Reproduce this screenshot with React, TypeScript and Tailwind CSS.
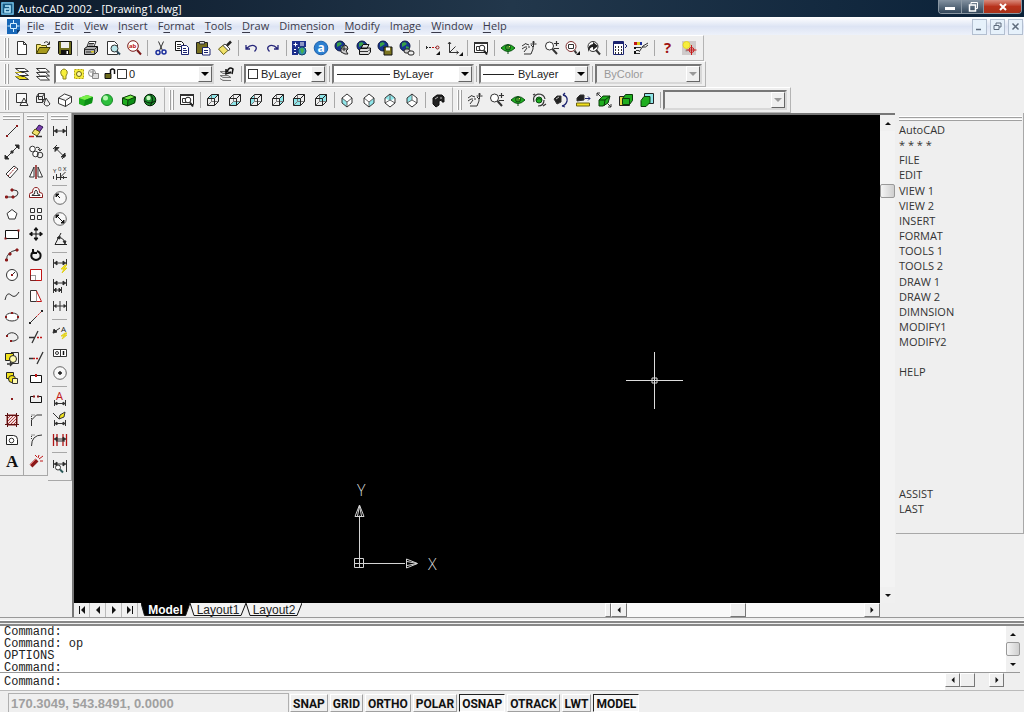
import { ReactNode } from "react";
import clsx from "clsx";

const RED = "#8b1a1a";
const GREEN = "#1fae1f";
const CYAN = "#8fe6ea";

// Wireframe box seen from the front, one face filled
const viewBox = (face: string) => (
  <>
    <path d={face} fill={CYAN} stroke="none" />
    <path d="M6.500 2.500v7h7M6.500 9.500l-4 4" stroke="#777" />
    <path d="M2.500 6.500h7v7h-7zM2.500 6.500l4-4h7v7l-4 4M9.500 6.500l4-4" stroke="#222" />
  </>
);

// Box standing on its corner
const isoBox = (face: string, edges: string) => (
  <>
    <path d="M8 2l5 4v5l-5 4-5-4V6z" fill="#fff" stroke="none" />
    <path d={face} fill={CYAN} stroke="none" />
    <path d={edges} stroke="#666" />
    <path d="M8 2l5 4v5l-5 4-5-4V6z" />
  </>
);

const globe = (
  <>
    <circle cx="6" cy="6" r="5" fill="#16348f" stroke="#0b1740" />
    <path d="M3 3l3-1 2 2-3 2-2 1zM7 6l3 1-1 3-2-1z" fill="#37a047" stroke="none" />
  </>
);

const lens = (
  <>
    <circle cx="6.500" cy="6" r="4" fill="#fff" />
    <path d="M9.500 9l4.500 5" strokeWidth="2" />
  </>
);

const hand = (
  <path
    d="M1 6l3-2M1 9l3-2M3 12l3-4M4 3.500l4 1.500M5 8V6M8 8V6M3 14h7l2-5V7L10 5M12.500 1v6M9.500 4h6M11.500 2.500l1-1.500 1 1.500"
    stroke="#333"
  />
);

const eye = (
  <>
    <path d="M1 8q7-7 14 0q-7 7-14 0z" fill={GREEN} stroke="#0a4d12" />
    <circle cx="8" cy="7.500" r="2.500" fill="#3f8f2a" stroke="#0a4d12" />
    <path d="M9 6h1v1H9z" fill="#f1e26a" stroke="none" />
    <path d="M8 12v2" stroke="#0a4d12" />
  </>
);

const solidBox = (
  <>
    <path d="M1 6l8-3 6 2-1 6-8 3-5-2z" fill={GREEN} stroke="none" />
    <path d="M1 6l8-3 6 2-8 3z" fill="#7af04a" stroke="none" />
    <path d="M7 8l8-3-1 6-8 3z" fill="#0c8f16" stroke="none" />
  </>
);

const camera = (
  <>
    <path d="M3 6l4-3h5l2 2v5h-2V8L9 9v4l-3 2-3-3z" fill="#222" stroke="#111" />
    <path d="M5 7l3-2M10 6h2" stroke="#bbb" />
  </>
);

const dimH = (
  <path d="M1.500 3v10M14.500 3v10M2 8h12M5 6L2.500 8 5 10zM11 6l2.500 2L11 10z" fill="#111" />
);

const icons: Record<string, ReactNode> = {
  "New": <path d="M3.500 1.500h6l3 3v10h-9zM9.500 1.500v3h3" fill="#fff" />,
  "Open": (
    <>
      <path d="M1.500 13.500v-9h4l1 1h5v2" fill="#f4e36b" stroke="#55500c" />
      <path d="M1.500 13.500l3-6h10.500l-3.500 6z" fill="#a79a1c" stroke="#3d3a08" />
      <path d="M9 3q3-3 5 1M14.500 1.500V4.500H12" />
    </>
  ),
  "Save": (
    <>
      <path d="M1.500 1.500h13v13h-12l-1-1z" fill="#6d6b1c" stroke="#111" />
      <path d="M4 2h8v6H4z" fill="#eee" stroke="none" />
      <path d="M4 10h8v4.500H4z" fill="#111" stroke="none" />
      <path d="M9.500 11h1.500v3H9.500z" fill="#fff" stroke="none" />
    </>
  ),
  "Plot": (
    <>
      <path d="M4 6.500l2-5h7l-2 5z" fill="#fff" />
      <path d="M1.500 8.500l3-2h10v5l-3 3h-10z" fill="#aaa" stroke="#111" />
      <path d="M1.500 9.500h10v5M11.500 9.500l3-3M3 12h6M6 3.500h5M5.500 5h5" />
      <path d="M8 11h3v1.500H8z" fill="#d6c620" stroke="none" />
    </>
  ),
  "Plot Preview": (
    <>
      <path d="M2.500 1.500h7l3 3v10h-10z" fill="#fff" />
      <circle cx="9.500" cy="8.500" r="3.500" fill="#b8e6ea" />
      <path d="M12 11.500l3 3" stroke="#2c4a5a" strokeWidth="2" />
    </>
  ),
  "Find and Replace": (
    <>
      <circle cx="7" cy="6" r="5.300" fill="#fff" stroke="#7c1a1a" />
      <text x="3" y="8" fontSize="6" fontWeight="bold" fill="#c01515" stroke="none">ab</text>
      <path d="M11 10l4 4.500" stroke="#7c1a1a" strokeWidth="2" />
    </>
  ),
  "Cut": (
    <>
      <path d="M5.500 1.500l4 9M10.500 1.500l-4 9" />
      <circle cx="5" cy="12.500" r="2" stroke="#1c2f9c" strokeWidth="1.500" />
      <circle cx="11" cy="12" r="2" stroke="#1c2f9c" strokeWidth="1.500" />
    </>
  ),
  "Copy": (
    <>
      <path d="M1.500 1.500h6l2 2v7h-8z" fill="#fff" stroke="#111" />
      <path d="M3 4.500h4M3 6.500h4M3 8.500h3" />
      <path d="M7.500 5.500h5l2 2v7h-7z" fill="#fff" stroke="#1c2470" />
      <path d="M9 8.500h3M9 10.500h4M9 12.500h4" stroke="#1c2470" />
    </>
  ),
  "Paste": (
    <>
      <path d="M1.500 2.500h11v11h-11z" fill="#77701f" stroke="#222" />
      <path d="M4.500 1.500h5v2.500h-5z" fill="#ddd" />
      <path d="M7.500 7.500h6l1.500 1.500v6h-7.500z" fill="#fff" stroke="#1c2470" />
      <path d="M9 10.500h4M9 12.500h4" stroke="#1c2470" />
    </>
  ),
  "Match Properties": (
    <>
      <path d="M1.500 9l5-4 5 5-5 4.500z" fill="#f1e26a" stroke="#6a6212" />
      <path d="M6 5.500l2-1.500 5 5-1.500 2z" fill="#fff" stroke="#444" />
      <path d="M10 5.500l4-4" stroke="#222" strokeWidth="2.500" />
    </>
  ),
  "Undo": <path d="M3 5v4h4M3.500 8.500q5-5 9-2 2 2-1 5" stroke="#26267a" strokeWidth="1.300" />,
  "Redo": <path d="M13 5v4H9M12.500 8.500q-5-5-9-2-2 2 1 5" stroke="#26267a" strokeWidth="1.300" />,
  "DesignCenter": (
    <>
      <path d="M1 1h14v6H7v8H1z" fill="#1c2f8c" stroke="none" />
      <path d="M2.500 4.500h4M4.500 2.500v4M9 3h4M9 5h4M3 9.500h2M3 12.500h2" stroke="#fff" />
      <circle cx="11" cy="11" r="4" fill="#2f8fb0" stroke="#15406b" />
      <path d="M9 9l3-1 1 3-2 3z" fill="#46b04a" stroke="none" />
    </>
  ),
  "Today": (
    <>
      <circle cx="8" cy="8" r="6.800" fill="#2d7fd0" stroke="#1d62ac" />
      <text x="4.500" y="12" fontSize="12" fontWeight="bold" fill="#fff" stroke="none">a</text>
    </>
  ),
  "Meet Now": (
    <>
      {globe}
      <path d="M7 9l3-4 3 1 1 3-2 2 2 3h-3l-4-2z" fill="#ccc" stroke="#222" />
      <path d="M10 6v5M8 9h5" stroke="#222" />
    </>
  ),
  "Publish to Web": (
    <>
      {globe}
      <path d="M5 8.500l2-4h6l-2 4zM3.500 9.500l2-1.500h9v4l-2 2.500h-9z" fill="#ddd" stroke="#111" />
      <path d="M4 11.500h8M12.500 11l2-2" />
    </>
  ),
  "eTransmit": (
    <>
      {globe}
      <path d="M7 7h8v8H7z" fill="#7b7420" stroke="#111" />
      <path d="M9 7.500h4v3H9z" fill="#fff" stroke="none" />
    </>
  ),
  "Hyperlink": (
    <>
      {globe}
      <rect x="5" y="9" width="6" height="4" rx="2" fill="#ccc" stroke="#222" />
      <rect x="9" y="11" width="6" height="4" rx="2" fill="#eee" stroke="#222" />
    </>
  ),
  "Temporary Tracking": (
    <>
      <path d="M1 7.500h6" strokeDasharray="2 1" stroke="#222" />
      <path d="M7 7.500h4" strokeDasharray="2 1" stroke="#c01515" />
      <circle cx="12.500" cy="7.500" r="1.500" stroke={RED} />
      <path d="M1.500 6v3" />
      <path d="M15 11v4h-4z" fill="#111" stroke="none" />
    </>
  ),
  "UCS": (
    <>
      <path d="M2.500 2v10.500h9M2.500 12.500l6-6M1 4l1.500-2L4 4M9.500 11l2 1.500-2 1.500" />
      <path d="M16 12v4h-4z" fill="#111" stroke="none" />
    </>
  ),
  "Named Views": (
    <>
      <path d="M1.500 2.500h13v10h-13z" fill="#fff" stroke="#222" />
      <path d="M1 3h14" strokeWidth="2" />
      <path d="M3.500 6.500h4v4h-4z" />
      <circle cx="9" cy="8" r="2.800" fill="#fff" stroke="#222" />
      <path d="M11 10.500l3 4" stroke="#222" strokeWidth="2" />
    </>
  ),
  "3D Orbit": eye,
  "Pan": hand,
  "Zoom Realtime": (
    <>
      {lens}
      <path d="M11 3.500h5M13.500 1v5M11 8.500h5" strokeWidth="1.200" />
    </>
  ),
  "Zoom Window": (
    <>
      <circle cx="7" cy="6.500" r="5" fill="#fff" stroke="#7c2a2a" />
      <path d="M4.500 4.500h5v4h-5z" />
      <path d="M10.500 10.500l2 3" strokeWidth="2" />
      <path d="M16 11v4h-4z" fill="#111" stroke="none" />
    </>
  ),
  "Zoom Previous": (
    <>
      <circle cx="8" cy="6.500" r="5" fill="#fff" />
      <path d="M3 10q0-5 5-6V2l5 4-5 4V7q-3 0-5 5z" fill="#222" stroke="none" />
      <path d="M11 10l4 4.500" strokeWidth="2" />
    </>
  ),
  "Properties": (
    <>
      <path d="M1.500 1.500h10v13h-10z" fill="#fff" stroke="#1c2470" />
      <path d="M1.500 3h10" stroke="#1c2470" strokeWidth="2" />
      <path d="M3.500 6v8M6.500 6v8M9.500 6v8" strokeDasharray="2 1" />
      <path d="M13 4l2 2-2 2" stroke="#1c2470" />
    </>
  ),
  "Layer States": (
    <>
      <path d="M1 2h3v3H1z" fill="#c01515" stroke="none" />
      <path d="M4 2h3v3H4z" fill="#d9c81a" stroke="none" />
      <path d="M7 2h2v3H7z" fill="#1c2f9c" stroke="none" />
      <path d="M3 7.500h5M3 10.500h3M3 13.500h4M6 12l4-6 5-3M9 7q4 1 6-2" stroke="#333" />
      <path d="M1 7h2v2H1zM1 11h2v3H1z" fill="#111" stroke="none" />
    </>
  ),
  "Help": (
    <text x="4" y="13" fontSize="15" fontWeight="bold" fill="#a01414" stroke="none">?</text>
  ),
  "Active Assistance": (
    <>
      <path d="M1 1h14v14H1z" fill="#cfcaca" stroke="none" />
      <circle cx="5.500" cy="5" r="3.500" fill="#f7ee3e" stroke="#e4d62a" />
      <path d="M4.500 9.500h2v2h-2z" fill="#999" stroke="none" />
      <circle cx="10.500" cy="10" r="2.500" stroke="#c81b1b" />
      <path d="M10.500 5v10M5.500 10h10" stroke="#c81b1b" />
    </>
  ),
  "Make Object's Layer Current": (
    <>
      <path d="M1.500 2.500h9l4 3h-9zM1.500 6.500h9l4 3h-9z" fill="#fff" />
      <path d="M1.500 10.500h9l4 3h-9z" fill="#f1df1c" />
      <path d="M1.500 6.500h6M1.500 10.500h6" stroke="#c9b90f" />
    </>
  ),
  "Layers": (
    <path d="M1.500 10.500h9l4 3.500h-9zM1.500 6.500h9l4 3.500h-9zM1.500 2.500h9l4 3.500h-9z" fill="#fff" />
  ),
  "Layer Previous": (
    <>
      <path d="M1 5.500h8l3 2H4zM1 9.500h8l3 2H4zM1 12.500l3 2h8" fill="#ddd" stroke="#777" />
      <path d="M7 3v5l5-2M8 6q2-6 6-3l-1 5" stroke="#111" strokeWidth="1.500" />
    </>
  ),
  "2D Wireframe": (
    <path d="M2.500 1.500h10v9h-10zM10 6l4 7.500H6z" fill="#fff" fillOpacity=".6" />
  ),
  "3D Wireframe": (
    <>
      <path d="M1.500 4.500h6v6h-6zM1.500 4.500l2-3h6v6l-2 3M7.500 4.500l2-3M3.500 1.500v6h6" />
      <path d="M11 6l4 6q-3 4-6 0z" fill="#eee" />
    </>
  ),
  "Hidden": <path d="M1.500 6l6-4 7 2.500v6l-6 4-7-3zM1.500 6l7 2.500 6-4M8.500 8.500v6" fill="#fff" />,
  "Flat Shaded": solidBox,
  "Gouraud Shaded": (
    <>
      <circle cx="8" cy="8" r="5.500" fill="#2cbf3c" stroke="#1a8a2a" />
      <circle cx="6.500" cy="6" r="2.500" fill="#b5f7b0" stroke="none" />
    </>
  ),
  "Flat Shaded, Edges On": (
    <>
      {solidBox}
      <path d="M1.500 6l8-3 5 2-1 6-7 3-5-2zM1.500 6L7 8l7.500-3M7 8l-.5 6" stroke="#0a3a0a" />
    </>
  ),
  "Gouraud Shaded, Edges On": (
    <>
      <circle cx="8" cy="8" r="5.800" fill="#1a8a2a" stroke="#061f08" />
      <circle cx="6.500" cy="6" r="2.200" fill="#c7f7c0" stroke="none" />
      <path d="M3 9q5 4 10 0M8 2q5 5 0 12" stroke="#061f08" />
    </>
  ),
  "Top View": viewBox("M2.500 6.500l4-4h7l-4 4z"),
  "Bottom View": viewBox("M2.500 13.500l4-4h7l-4 4z"),
  "Left View": viewBox("M2.500 6.500l4-4v7l-4 4z"),
  "Right View": viewBox("M9.500 6.500l4-4v7l-4 4z"),
  "Front View": viewBox("M2.500 6.500h7v7h-7z"),
  "Back View": viewBox("M6.500 2.500h7v7h-7z"),
  "SW Isometric View": isoBox("M3 6l5 4v5l-5-4z", "M3 6l5 4 5-4M8 10v5"),
  "SE Isometric View": isoBox("M13 6l-5 4v5l5-4z", "M3 6l5 4 5-4M8 10v5"),
  "NE Isometric View": isoBox("M8 2l5 4-5 3-5-3z", "M8 2v6M3 11l5-3 5 3"),
  "NW Isometric View": isoBox("M8 2L3 6v5l5-3z", "M8 2v6M3 11l5-3 5 3"),
  "Camera": camera,
  "3D Pan": hand,
  "3D Zoom": (
    <>
      {lens}
      <path d="M11 3.500h5M13.500 1v5M11 8.500h5" strokeWidth="1.200" />
    </>
  ),
  "3D Free Orbit": eye,
  "3D Continuous Orbit": (
    <>
      <path d="M3 10q-2-6 4-8 6 0 7 5M13 8q0 6-6 6M2 3l2-1M12 14l3-2" strokeWidth="1.200" />
      <circle cx="8" cy="8" r="3" fill={GREEN} stroke="#0a4d12" />
      <path d="M5 8q3-3 6 0" stroke="#0a4d12" />
    </>
  ),
  "3D Swivel": (
    <>
      <path d="M1 7l3-3h4v6l-4 2z" fill="#222" />
      <path d="M3 7l3-2" stroke="#bbb" />
      <path d="M10 3q5 1 4 6-1 4-5 5M10 3l2-2M9 14l3 1" stroke="#1c2470" strokeWidth="1.300" />
    </>
  ),
  "3D Adjust Distance": (
    <>
      <path d="M2 6l3-3h4v5l-7 1z" fill="#222" />
      <path d="M10 6.500h5M13 4.500l2 2-2 2" stroke="#1c2470" />
      <path d="M1.500 11h13v3h-13z" fill="#f1df1c" stroke="#6a6212" />
    </>
  ),
  "3D Adjust Clip Planes": (
    <>
      <path d="M3 8l4-4h7l-2 7-5 3H3z" fill={GREEN} stroke="#0a3a0a" />
      <path d="M3 8h6l5-4M9 8l-1 6" stroke="#0a3a0a" />
      <path d="M1 1l4 4M15 15l-3-3M1 4V1h3M15 12v3h-3" />
    </>
  ),
  "Front Clip On": (
    <>
      <path d="M1.500 4.500h10v9h-10z" fill="#e6d84a" stroke="#222" />
      <path d="M4.500 6.500l3-4h7v6l-3 4h-7z" fill={GREEN} stroke="#0a3a0a" />
      <path d="M4.500 6.500h7v6" stroke="#0a3a0a" />
    </>
  ),
  "Back Clip On": (
    <>
      <path d="M5.500 1.500h9v10h-9z" fill={CYAN} stroke="#222" />
      <path d="M2 8.500l3-4h6v6l-4 4H2z" fill={GREEN} stroke="#0a3a0a" />
    </>
  ),
  "Line": (
    <>
      <path d="M3 13L13 3" />
      <path d="M2 12h2v2H2zM12 2h2v2h-2z" fill={RED} stroke="none" />
    </>
  ),
  "Construction Line": (
    <>
      <path d="M2 14L14 2" />
      <path d="M1 15v-4l4 4zM15 1v4l-4-4zM7 7h2v2H7z" fill="#222" />
    </>
  ),
  "Multiline": (
    <>
      <path d="M2 10l8-8 4 3-8 9z" fill="#fff" />
      <path d="M4 12l8-9" stroke={RED} strokeDasharray="2 1" />
    </>
  ),
  "Polyline": (
    <>
      <path d="M2 12h8q4-1 4-4t-4-3H8" />
      <path d="M1.500 11h2v2h-2zM8 11h2v2H8zM7 4h2v2H7z" fill={RED} stroke={RED} />
    </>
  ),
  "Polygon": <path d="M8 3.500l5 4-2 5.500H5l-2-5.500z" fill="#fff" />,
  "Rectangle": (
    <>
      <path d="M1.500 4.500h13v8h-13z" fill="#fff" stroke="#111" />
      <path d="M0.500 11.500h2v2h-2zM13.500 3.500h2v2h-2z" fill={RED} stroke="none" />
    </>
  ),
  "Arc": (
    <>
      <path d="M2.500 13q0-8 10-10" />
      <path d="M1.500 12h2v2h-2zM5 6h2v2H5zM12 2h2v2h-2z" fill={RED} stroke={RED} />
    </>
  ),
  "Circle": (
    <>
      <circle cx="8" cy="8" r="5.500" fill="#fff" />
      <path d="M8 8l3-3" />
      <path d="M7 7h2v2H7z" fill={RED} stroke="none" />
    </>
  ),
  "Spline": <path d="M1 12q2-9 6-5t8-3" />,
  "Ellipse": (
    <>
      <ellipse cx="8" cy="8" rx="6.500" ry="4" fill="#fff" />
      <path d="M7 3h2v2H7zM1 7h2v2H1zM13 7h2v2h-2z" fill={RED} stroke="none" />
    </>
  ),
  "Ellipse Arc": (
    <>
      <path d="M3 6q4-4 9-1 5 5-2 7H8" />
      <path d="M2 6h2v2H2zM6 11h2v2H6z" fill={RED} stroke="none" />
    </>
  ),
  "Insert Block": (
    <>
      <path d="M1.500 3.500h8v7h-8z" fill="#f1e21c" stroke="#222" />
      <path d="M7 2.500h7.500v11H8" />
      <circle cx="9" cy="9" r="3.500" fill="#fffbb0" stroke="#222" />
      <path d="M3 14h5M6 12l2 2-2 2" strokeWidth="1.300" />
    </>
  ),
  "Make Block": (
    <>
      <path d="M2.500 2.500h7v6h-7z" fill="#f1e21c" stroke="#222" />
      <circle cx="8" cy="9" r="3.500" fill="#f1e21c" stroke="#222" />
      <path d="M8.500 8.500h5v5h-5z" fill="#fffbb0" />
    </>
  ),
  "Point": <path d="M7 7h2v2H7z" fill={RED} stroke="none" />,
  "Hatch": (
    <>
      <path d="M3 3h10v10H3z" fill="#f0dada" stroke={RED} />
      <path d="M3 7l4-4M3 10l7-7M3 13L13 3M6 13l7-7M9 13l4-4" stroke="#b04040" />
      <path d="M1 3.500h14M1 12.500h14M3.500 1v14M12.500 1v14" stroke="#5b1010" />
    </>
  ),
  "Region": (
    <>
      <path d="M2.500 12.500v-9h7q4 0 4 4v5z" fill="#fff" stroke="#222" />
      <circle cx="7.500" cy="8.500" r="2.300" />
    </>
  ),
  "Multiline Text": (
    <text x="2" y="14" fontSize="17" fontWeight="bold" fontFamily="Liberation Serif, serif" fill="#111" stroke="none">A</text>
  ),
  "Erase": (
    <>
      <path d="M6 9l5-7 4 2-5 7z" fill="#7a3fae" stroke="#2c1250" />
      <path d="M4 10l3-4 5 3-3 4z" fill="#f1e26a" stroke="#55500c" />
      <path d="M1 13.500h5" stroke="#c01515" strokeWidth="1.500" />
      <path d="M8 13.500h6" strokeWidth="1.500" />
    </>
  ),
  "Copy Object": (
    <>
      <circle cx="4.500" cy="5" r="2.800" fill="#fff" />
      <circle cx="7.500" cy="10" r="2.800" fill="#fff" />
      <circle cx="12" cy="11" r="2.800" />
      <path d="M8 3.500q4-1 4 3M10 5l2 2 2-2" />
    </>
  ),
  "Mirror": (
    <>
      <path d="M6 3v10H1.500zM10 3v10h4.500z" fill="#fff" />
      <path d="M8 1v14" stroke={RED} strokeWidth="1.500" />
    </>
  ),
  "Offset": (
    <>
      <path d="M1.500 12.500v-3q0-2 3-2 0-5 3.500-5t3.500 5q3 0 3 2v3z" stroke={RED} fill="#fff" />
      <path d="M4 10.500q0-1.500 2.500-1.500 0-4 1.500-4t1.500 4q2.500 0 2.500 1.500z" />
    </>
  ),
  "Array": <path d="M2.500 2.500h4v4h-4zM9.500 2.500h4v4h-4zM2.500 9.500h4v4h-4zM9.500 9.500h4v4h-4z" fill="#fff" />,
  "Move": (
    <path d="M8 2v12M2 8h12M6 4l2-2.500L10 4zM6 12l2 2.500 2-2.500zM4 6L1.500 8 4 10zM12 6l2.500 2-2.500 2z" fill="#111" stroke="#111" />
  ),
  "Rotate": <path d="M6 4q-4 3-2 7 4 4 8 0 2-5-3-7M5 2v4h4" stroke="#111" strokeWidth="2" />,
  "Scale": (
    <>
      <path d="M2.500 2.500h11v11h-11z" stroke="#c01515" fill="#fff" />
      <path d="M2.500 8.500h5v5h-5z" strokeDasharray="1 1" />
    </>
  ),
  "Stretch": (
    <>
      <path d="M2.500 2.500h6v11h-6z" fill="#fff" />
      <path d="M8.500 3l5 10.500h-5" stroke="#c01515" fill="#fff" />
    </>
  ),
  "Lengthen": (
    <>
      <path d="M8 8l6-6" stroke="#c01515" strokeDasharray="2 1" />
      <path d="M2 14l6-6" />
      <path d="M1 13h2v2H1zM13 1h2v2h-2z" fill="#222" stroke="none" />
    </>
  ),
  "Trim": (
    <>
      <path d="M10 2L4 14M1 8.500h6" strokeWidth="1.300" />
      <path d="M9 8.500h6" stroke="#c01515" strokeDasharray="2 1" strokeWidth="1.500" />
    </>
  ),
  "Extend": (
    <>
      <path d="M15 2L9 14M1 8.500h4" strokeWidth="1.300" />
      <path d="M5 8.500h6" stroke="#c01515" strokeDasharray="2 1" strokeWidth="1.500" />
    </>
  ),
  "Break at Point": (
    <>
      <path d="M2.500 5.500h11v7h-11z" fill="#fff" stroke="#111" />
      <path d="M7 4h2v3H7z" fill="#c01515" stroke="none" />
    </>
  ),
  "Break": (
    <>
      <path d="M6 5.500H2.500v6h11v-6H10" stroke="#111" />
      <path d="M5 4.500h2v2H5zM9 4.500h2v2H9z" fill={RED} stroke="none" />
    </>
  ),
  "Chamfer": (
    <>
      <path d="M3.500 14V8l5-5H14" />
      <path d="M3.500 7V3H7" strokeDasharray="1 1" />
    </>
  ),
  "Fillet": (
    <>
      <path d="M3.500 14q0-11 10.500-11" />
      <path d="M3.500 7V3H7" strokeDasharray="1 1" />
    </>
  ),
  "Explode": (
    <>
      <path d="M3 13l6-6" stroke="#8b1a1a" strokeWidth="4" />
      <path d="M2 12l6-6" stroke="#e26a6a" />
      <path d="M10 5l1-3M11 6l4-3M12 8h3M9 4L7 2" stroke="#c01515" />
    </>
  ),
  "Linear Dimension": dimH,
  "Aligned Dimension": (
    <path d="M1 5l4-4M10 15l4-4M3.500 4l8.500 8.500M3 3.500v4l4-4zM13 13v-4l-4 4z" fill="#222" />
  ),
  "Ordinate Dimension": (
    <>
      <text x="1" y="8" fontSize="6" fill="#222" stroke="none">Y</text>
      <text x="6" y="6" fontSize="6" fill="#222" stroke="none">0</text>
      <text x="11" y="6" fontSize="6" fill="#222" stroke="none">X</text>
      <path d="M1.500 11v3M4.500 9v6M4 12.500h11M8.500 8v7M13.500 7l-5 5M11.500 11v3" />
    </>
  ),
  "Radius Dimension": (
    <>
      <circle cx="8" cy="8" r="6.300" fill="#f8f8f8" stroke="#666" />
      <path d="M8 8L5 5M4 4h3L4 7z" fill="#111" stroke="#111" />
    </>
  ),
  "Diameter Dimension": (
    <>
      <circle cx="8" cy="8" r="6.300" fill="#f8f8f8" stroke="#666" />
      <path d="M5 5l6 6M4 4h3L4 7zM12 12H9l3-3z" fill="#111" stroke="#111" />
    </>
  ),
  "Angular Dimension": (
    <>
      <path d="M9 2L3 13.500h12M6 6q6 1 7 6" stroke="#222" />
      <path d="M5 7l3-2v3zM13 13l-2-3h3z" fill="#222" />
    </>
  ),
  "Quick Dimension": (
    <>
      <path d="M1.500 2v9M14.500 2v7M2 6h12M5 4L2.500 6 5 8zM11 4l2.500 2L11 8z" fill="#111" />
      <path d="M13 8l-4 4h3l-2 4 5-5h-3l3-3z" fill="#f1e21c" stroke="#e0d020" />
    </>
  ),
  "Baseline Dimension": (
    <path d="M1.500 1v14M14.500 1v7M9.500 9v6M2 5h12M2 12h7M5 3L2.500 5 5 7zM11 3l2.500 2L11 7zM4 10l-2 2 2 2zM7 10l2 2-2 2z" fill="#111" />
  ),
  "Continue Dimension": (
    <path d="M1.500 3v10M8 3v10M14.500 3v10M2 8h12M4 6.500L2.500 8 4 9.500zM12 6.500L13.500 8 12 9.500z" fill="#111" />
  ),
  "Quick Leader": (
    <>
      <path d="M1 9l4-3 3-2M1 9l1-4 3 3z" fill="#222" />
      <text x="9" y="8" fontSize="8" fill="#222" stroke="none">A</text>
      <path d="M13 9l-4 3h3l-2 3 5-4h-3l3-2z" fill="#f1e21c" stroke="#e0d020" />
    </>
  ),
  "Tolerance": (
    <>
      <path d="M1.500 4.500h13v7h-13zM8.500 4.500v7" fill="#fff" />
      <circle cx="5" cy="8" r="1.500" />
      <path d="M11.500 6v4" stroke="#111" strokeWidth="1.500" />
    </>
  ),
  "Center Mark": (
    <>
      <circle cx="8" cy="8" r="6.300" fill="#f8f8f8" stroke="#666" />
      <path d="M8 6v4M6 8h4" stroke="#111" strokeWidth="1.300" />
    </>
  ),
  "Dimension Edit": (
    <>
      <text x="4" y="9" fontSize="11" fill="#c01515" stroke="none">A</text>
      <path d="M2.500 9v6M13.500 9v6M3 12.500h10M5 11l-2 1.500L5 14zM11 11l2 1.500-2 1.500z" fill="#111" />
    </>
  ),
  "Dimension Text Edit": (
    <>
      <path d="M1 2l6 6M7 8l1-4 5-3-1 5z" fill="#f1e21c" stroke="#333" />
      <path d="M2.500 9v6M13.500 9v6M3 12.500h10M5 11l-2 1.500L5 14zM11 11l2 1.500-2 1.500z" fill="#111" />
    </>
  ),
  "Dimension Update": (
    <>
      <path d="M1.500 2v12M5 2v12M11 2v12M14.500 2v12" stroke="#b01515" strokeWidth="1.300" />
      <path d="M2 7h12M4 9h9M5 5L2.500 7 5 9zM11 5l2.500 2L11 9z" fill="#111" />
    </>
  ),
  "Dimension Style": (
    <>
      <path d="M1.500 2v8M14.500 2v12M2 6h12M5 4L2.500 6 5 8zM11 4l2.500 2L11 8z" fill="#111" />
      <circle cx="6" cy="9.500" r="2.500" fill="#fff" />
      <path d="M8 11.500l3 3" stroke="#2c5a5a" strokeWidth="2" />
    </>
  ),
};

const Icon = ({ name }: { name: string }) => (
  <svg viewBox="0 0 16 16" className="h-4 w-4 shrink-0 overflow-visible" fill="none" stroke="#333" aria-hidden="true">
    {icons[name]}
  </svg>
);

// "|" stands for a separator
const standard = [
  "New", "Open", "Save", "|", "Plot", "Plot Preview", "Find and Replace", "|",
  "Cut", "Copy", "Paste", "Match Properties", "|", "Undo", "Redo", "|",
  "DesignCenter", "Today", "Meet Now", "Publish to Web", "eTransmit", "Hyperlink", "|",
  "Temporary Tracking", "UCS", "|", "Named Views", "|",
  "3D Orbit", "Pan", "Zoom Realtime", "Zoom Window", "Zoom Previous", "|",
  "Properties", "Layer States", "|", "Help", "Active Assistance",
];
const shade = [
  "2D Wireframe", "3D Wireframe", "Hidden", "Flat Shaded", "Gouraud Shaded",
  "Flat Shaded, Edges On", "Gouraud Shaded, Edges On",
];
const views = [
  "Named Views", "|", "Top View", "Bottom View", "Left View", "Right View", "Front View", "Back View", "|",
  "SW Isometric View", "SE Isometric View", "NE Isometric View", "NW Isometric View", "|", "Camera",
];
const orbit = [
  "3D Pan", "3D Zoom", "3D Free Orbit", "3D Continuous Orbit", "3D Swivel", "3D Adjust Distance",
  "3D Adjust Clip Planes", "Front Clip On", "Back Clip On",
];
const draw = [
  "Line", "Construction Line", "Multiline", "Polyline", "Polygon", "Rectangle", "Arc", "Circle", "Spline",
  "Ellipse", "Ellipse Arc", "Insert Block", "Make Block", "Point", "Hatch", "Region", "Multiline Text",
];
const modify = [
  "Erase", "Copy Object", "Mirror", "Offset", "Array", "Move", "Rotate", "Scale", "Stretch",
  "Lengthen", "Trim", "Extend", "Break at Point", "Break", "Chamfer", "Fillet", "Explode",
];
const dimension = [
  "Linear Dimension", "Aligned Dimension", "Ordinate Dimension", "|",
  "Radius Dimension", "Diameter Dimension", "Angular Dimension", "|",
  "Quick Dimension", "Baseline Dimension", "Continue Dimension", "|",
  "Quick Leader", "Tolerance", "Center Mark", "|",
  "Dimension Edit", "Dimension Text Edit", "Dimension Update", "|", "Dimension Style",
];

// [before, hot key, after]
const menus = [
  ["", "F", "ile"], ["", "E", "dit"], ["", "V", "iew"], ["", "I", "nsert"], ["F", "o", "rmat"], ["", "T", "ools"],
  ["", "D", "raw"], ["Dime", "n", "sion"], ["", "M", "odify"], ["Im", "a", "ge"], ["", "W", "indow"], ["", "H", "elp"],
];

const screenMenu = [
  "AutoCAD", "* * * *", "FILE", "EDIT", "VIEW 1", "VIEW 2", "INSERT", "FORMAT", "TOOLS 1", "TOOLS 2",
  "DRAW 1", "DRAW 2", "DIMNSION", "MODIFY1", "MODIFY2", "", "HELP", "", "", "", "", "", "", "", "ASSIST", "LAST",
];

const modes = [
  { label: "SNAP", on: false },
  { label: "GRID", on: false },
  { label: "ORTHO", on: false },
  { label: "POLAR", on: false },
  { label: "OSNAP", on: true },
  { label: "OTRACK", on: false },
  { label: "LWT", on: false },
  { label: "MODEL", on: true },
];

const Tools = ({ items, vertical }: { items: string[]; vertical?: boolean }) => (
  <>
    {items.map((name, i) =>
      name === "|" ? (
        <span
          key={i}
          className={clsx("shrink-0", vertical ? "mx-1 my-[2px] h-px bg-[#a8a8a8]" : "mx-[2px] my-1 w-px bg-[#a8a8a8]")}
        />
      ) : (
        <button key={i} type="button" aria-label={name} className="flex min-h-0 min-w-0 flex-1 items-center justify-center">
          <Icon name={name} />
        </button>
      )
    )}
  </>
);

const Grip = () => (
  <span className="mr-[2px] flex shrink-0 gap-px py-[2px] pl-1">
    <span className="w-[2px] border-r border-[#a0a0a0] bg-white" />
    <span className="w-[2px] border-r border-[#a0a0a0] bg-white" />
  </span>
);

const Toolbar = ({ className, children }: { className?: string; children: ReactNode }) => (
  <div
    role="toolbar"
    className={clsx("flex h-[26px] shrink-0 border-b border-r border-t border-b-[#b4b4b4] border-r-[#b4b4b4] border-t-white pr-[3px]", className)}
  >
    <Grip />
    {children}
  </div>
);

const SideBar = ({ className, items }: { className: string; items: string[] }) => (
  <div
    role="toolbar"
    className={clsx("flex w-6 shrink-0 flex-col border-b border-r border-b-[#a8a8a8] border-r-[#a8a8a8] pb-1", className)}
  >
    <span className="mx-[3px] mb-px mt-[2px] flex shrink-0 flex-col gap-px">
      <span className="h-[2px] border-b border-[#a0a0a0] bg-white" />
      <span className="h-[2px] border-b border-[#a0a0a0] bg-white" />
    </span>
    <Tools items={items} vertical />
  </div>
);

interface ComboProps {
  label: string;
  value: string;
  className: string;
  pad?: string;
  disabled?: boolean;
  children?: ReactNode;
}

const Combo = ({ label, value, className, pad = "pl-1", disabled, children }: ComboProps) => (
  <div
    className={clsx(
      "relative my-[2px] h-5 shrink-0 border-2 border-b-[#d8d8d8] border-l-[#777] border-r-[#d8d8d8] border-t-[#777]",
      disabled ? "bg-[#efefef]" : "bg-white",
      className
    )}
  >
    <select
      aria-label={label}
      disabled={disabled}
      className={clsx(
        "block h-4 w-full appearance-none font-[Liberation_Sans,sans-serif] text-[11px] leading-4 opacity-100 outline-none",
        disabled ? "text-[#999]" : "text-[#222]",
        pad
      )}
    >
      <option>{value}</option>
    </select>
    <span className="pointer-events-none absolute inset-y-0 left-0 flex items-center">{children}</span>
    <span className="pointer-events-none absolute inset-y-0 right-0 flex w-[14px] items-center justify-center border border-b-[#666] border-l-white border-r-[#666] border-t-white bg-[#efefef]">
      <svg viewBox="0 0 8 4" className="h-1 w-2" fill={disabled ? "#999" : "#000"}>
        <path d="M0 0h8L4 4z" />
      </svg>
    </span>
  </div>
);

const arrows = {
  up: "M1 6h6L4 3z",
  down: "M1 3h6L4 6z",
  left: "M5.500 1v6L2.500 4z",
  right: "M2.500 1v6l3-3z",
  first: "M1 0h1v8H1zM7 0v8L3 4z",
  last: "M6 0h1v8H6zM1 0v8l4-4z",
  prev: "M6 0v8L2 4z",
  next: "M2 0v8l4-4z",
};

const Arrow = ({ dir, label, className }: { dir: keyof typeof arrows; label: string; className?: string }) => (
  <button type="button" aria-label={label} className={clsx("flex shrink-0 items-center justify-center bg-[#f0f0f0]", className)}>
    <svg viewBox="0 0 8 8" className="h-2 w-2" fill="#111">
      <path d={arrows[dir]} />
    </svg>
  </button>
);

const raised = "border border-b-[#777] border-l-white border-r-[#777] border-t-white";
const thumb = "rounded-[2px] border border-[#999] bg-linear-to-r from-[#f5f5f5] to-[#cfcfcf]";

const TitleBar = () => (
  <header className="flex h-[17px] items-start bg-linear-to-r from-[#0c1a2b] via-[#22374b] to-[#0a2138] pl-px text-white">
    <svg viewBox="0 0 13 13" className="mt-[2px] h-[13px] w-[13px]">
      <path d="M0 0h13v13H0z" fill="#2f7fae" />
      <path d="M1 1h11v11H1z" fill="#155a86" stroke="#8fd0ee" />
      <path d="M4 4h5v6H4V7h4" fill="none" stroke="#b9ecff" strokeWidth="1.500" />
    </svg>
    <h1 className="ml-1 flex-1 text-[11px] leading-[17px]">AutoCAD 2002 - [Drawing1.dwg]</h1>
    <div className="mr-[2px] flex h-[14px] overflow-hidden rounded-b-[4px] border border-t-0 border-[#8a97a3]">
      <button type="button" aria-label="Minimize" className="flex w-[23px] items-end justify-center border-r border-[#8a97a3] bg-linear-to-b from-[#8492a0] to-[#33475a] pb-[3px]">
        <span className="h-[3px] w-[10px] bg-white" />
      </button>
      <button type="button" aria-label="Restore" className="flex w-[22px] items-center justify-center border-r border-[#8a97a3] bg-linear-to-b from-[#8492a0] to-[#33475a]">
        <svg viewBox="0 0 10 10" className="h-[10px] w-[10px]" fill="none" stroke="#fff">
          <path d="M3 2.500v-2h6.500v6h-2" />
          <path d="M1.500 3h6v6h-6z" strokeWidth="1.500" />
        </svg>
      </button>
      <button type="button" aria-label="Close" className="flex w-[37px] items-center justify-center bg-linear-to-b from-[#d98a7c] via-[#b8321c] to-[#a83018]">
        <svg viewBox="0 0 8 8" className="h-2 w-2" stroke="#fff" strokeWidth="2">
          <path d="M1 1l6 6M7 1L1 7" />
        </svg>
      </button>
    </div>
  </header>
);

const MenuBar = () => (
  <nav className="flex h-[18px] items-center border-t border-white bg-linear-to-b from-[#fbfcfe] via-[#dde4f4] to-[#edf1fa] pl-[6px]">
    <svg viewBox="0 0 15 15" className="h-[15px] w-[15px]">
      <path d="M1 0h13v11l-3 4H1z" fill="#1767b8" />
      <path d="M4.500 4.500h6v5h-6zM7.500 1v4M7.500 9v4M1.500 7h3M10.500 7h3" fill="none" stroke="#d4efff" />
      <path d="M14 11h-3v4z" fill="#0a3564" />
    </svg>
    <ul className="ml-[6px] flex flex-1 gap-[10px] pb-px text-[11px] leading-4 text-[#3a3a4a]">
      {menus.map(([before, key, after]) => (
        <li key={before + key + after}>
          <button type="button">
            {before}
            <u className="underline-offset-2">{key}</u>
            {after}
          </button>
        </li>
      ))}
    </ul>
    <div className="flex gap-[3px] pr-px">
      {["M1 7.500h5", "M3 3V1h5v4H6M1 3.500h5v4H1z", "M1.500 1.500l6 6M7.500 1.500l-6 6"].map((d, i) => (
        <button
          key={d}
          type="button"
          aria-label={["Minimize drawing", "Restore drawing", "Close drawing"][i]}
          className="flex h-4 w-[15px] items-center justify-center border border-[#b3bfd0] bg-[#e6f1fb]"
        >
          <svg viewBox="0 0 9 9" className="h-[9px] w-[9px]" fill="none" stroke="#5d6b7c" strokeWidth={i === 1 ? 1 : 1.5}>
            <path d={d} />
          </svg>
        </button>
      ))}
    </div>
  </nav>
);

const Toolbars = () => (
  <div>
    <div className="flex">
      <Toolbar className="w-[704px]">
        <Tools items={standard} />
      </Toolbar>
    </div>
    <div className="flex">
      <Toolbar className="w-[706px]">
        <div className="flex w-[43px]">
          <Tools items={["Make Object's Layer Current", "Layers"]} />
        </div>
        <Combo label="Layer" value="0" className="w-[160px]" pad="pl-[73px]">
          <svg viewBox="0 0 70 14" className="ml-[2px] h-[14px] w-[70px]" fill="none" stroke="#333">
            <path d="M4 9q-2-3-1-5 3-4 6 0 1 2-1 5v3H5v-3z" fill="#f7ef3a" stroke="#8a8320" />
            <path d="M16.500 2.500h9v9h-9z" fill="#f7ef3a" stroke="#b8a80a" strokeDasharray="2 1" />
            <circle cx="21" cy="7" r="2.500" fill="#fffbb0" stroke="#6a6212" />
            <circle cx="34" cy="6" r="3.500" stroke="#888" />
            <path d="M34.500 6.500h6v5h-6zM32 5h4M35 2v7" stroke="#888" fill="#ddd" />
            <path d="M47 6.500h6v5h-6z" fill="#6d6b1c" stroke="#111" />
            <path d="M52.500 6V3q2-2 4 0v4" stroke="#111" strokeWidth="1.500" />
            <path d="M59.500 2.500h9v9h-9z" fill="#fff" />
          </svg>
        </Combo>
        <div className="flex w-[25px]">
          <Tools items={["Layer Previous"]} />
        </div>
        <Tools items={["|"]} />
        <Combo label="Color" value="ByLayer" className="w-[83px]" pad="pl-[15px]">
          <span className="ml-[2px] h-[10px] w-[10px] border border-[#333] bg-white" />
        </Combo>
        <Tools items={["|"]} />
        <Combo label="Linetype" value="ByLayer" className="w-[142px]" pad="pl-[59px]">
          <span className="ml-[3px] h-px w-[53px] bg-[#222]" />
        </Combo>
        <Tools items={["|"]} />
        <Combo label="Lineweight" value="ByLayer" className="w-[111px]" pad="pl-[37px]">
          <span className="ml-[2px] h-px w-[31px] bg-[#222]" />
        </Combo>
        <Tools items={["|"]} />
        <Combo label="Plot style" value="ByColor" className="w-[107px]" pad="pl-[7px]" disabled />
      </Toolbar>
    </div>
    <div className="flex">
      <Toolbar className="w-[165px]">
        <Tools items={shade} />
      </Toolbar>
      <Toolbar className="w-[288px]">
        <Tools items={views} />
      </Toolbar>
      <Toolbar className="w-[338px]">
        <div className="flex w-[194px]">
          <Tools items={orbit} />
        </div>
        <Tools items={["|"]} />
        <Combo label="Saved view" value="" className="w-[124px]" disabled />
      </Toolbar>
    </div>
  </div>
);

const Drawing = () => (
  <div className="relative min-w-0 flex-1 overflow-hidden bg-black">
    <svg viewBox="0 0 90 92" className="absolute bottom-8 left-[279px] h-[92px] w-[90px] overflow-visible" fill="none" stroke="#d4d4d4">
      <path d="M1.500 79.500h9v9h-9zM6.500 88V36.500M1.500 84.500H52M2 37.500h9l-4.500-11.500zM4.500 37l2-10 2 10M53.500 80v9l11-4.500zM54 82.500l10 2-10 2" />
      <text x="4" y="17" fontSize="16" fontWeight="300" fill="#d4d4d4" stroke="none">Y</text>
      <text x="75" y="91" fontSize="16" fontWeight="300" fill="#d4d4d4" stroke="none">X</text>
    </svg>
    <svg viewBox="0 0 58 58" className="absolute left-[552px] top-[237px] h-[58px] w-[58px]" fill="none" stroke="#ddd">
      <path d="M0 28.500h57M28.500 0v57M26 26h5v5h-5z" />
    </svg>
  </div>
);

const SheetTabs = () => (
  <div className="flex h-[14px]">
    <div className="flex divide-x divide-[#bbb] border-r border-[#bbb]">
      <Arrow dir="first" label="First tab" className="w-4" />
      <Arrow dir="prev" label="Previous tab" className="w-4" />
      <Arrow dir="next" label="Next tab" className="w-4" />
      <Arrow dir="last" label="Last tab" className="w-[15px]" />
    </div>
    <div className="ml-[3px] flex font-[Liberation_Sans,sans-serif] text-[12px] leading-[12px] text-[#222]">
      {["Model", "Layout1", "Layout2"].map((name, i) => (
        <button key={name} type="button" className={clsx("relative h-[13px]", i === 0 ? "w-[49px] font-bold text-white" : "w-[56px]")}>
          <svg viewBox="0 0 56 13" preserveAspectRatio="none" className="absolute inset-0 h-full w-full" fill={i === 0 ? "#000" : "#f4f4f4"} stroke="#111">
            <path d="M0 0l4 12.500h47L56 0" />
          </svg>
          <span className="relative">{name}</span>
        </button>
      ))}
    </div>
    <div className="flex-1" />
    <div className="flex w-[275px] bg-[#f9f9f9]">
      <span className={clsx("w-[6px] bg-[#efefef]", raised)} />
      <Arrow dir="left" label="Scroll left" className={clsx("w-4", raised)} />
      <span className="w-[103px]" />
      <span className={clsx("w-4 bg-[#efefef]", raised)} />
      <span className="flex-1" />
      <Arrow dir="right" label="Scroll right" className={clsx("w-4", raised)} />
    </div>
  </div>
);

const CommandWindow = () => (
  <section className="font-[Liberation_Mono,monospace] text-[12px] text-[#222]">
    <div className="h-[4px] border-b border-t border-b-white border-t-[#999]" />
    <div className="h-[5px] border-b-2 border-t-2 border-b-[#888] border-t-[#888]" />
    <div className="mr-1 flex h-[47px] border-b border-[#999]">
      <pre className="flex-1 overflow-hidden bg-white pl-1 font-[Liberation_Mono,monospace] leading-[12px]">
        {"Command:\nCommand: op\nOPTIONS\nCommand:"}
      </pre>
      <div className="flex w-[14px] flex-col bg-[#f0f0f0]">
        <Arrow dir="up" label="History up" className="h-4" />
        <span className={clsx("h-[14px]", thumb)} />
        <Arrow dir="down" label="History down" className="h-4" />
      </div>
    </div>
    <div className="flex h-[17px] pr-5">
      <label htmlFor="command" className="bg-white pl-1 leading-[18px]">Command:</label>
      <input id="command" className="min-w-0 flex-1 bg-white outline-none" />
      <Arrow dir="left" label="Scroll command left" className={clsx("h-[14px] w-[15px]", raised)} />
      <span className={clsx("h-[14px] w-[15px]", raised)} />
      <span className="w-[14px]" />
      <Arrow dir="right" label="Scroll command right" className={clsx("h-[14px] w-[15px]", raised)} />
    </div>
  </section>
);

const StatusBar = () => (
  <footer className="flex h-[22px] items-end border-t border-[#bbb] text-[12px] font-bold">
    <output className="ml-2 h-[19px] w-[281px] border border-b-0 border-[#b0b0b0] pl-[2px] font-[Liberation_Sans,sans-serif] text-[13px] leading-[19px] text-[#a0a0a0]">
      170.3049, 543.8491, 0.0000
    </output>
    <div className="ml-px flex gap-[2px] font-[Roboto,sans-serif] text-[#111]">
      {modes.map(({ label, on }) => (
        <button
          key={label}
          type="button"
          aria-pressed={on}
          className={clsx(
            "h-[18px] border px-[2px] leading-[18px]",
            on ? "border-b-white border-l-[#222] border-r-white border-t-[#222] bg-[#f6f6f6]" : "border-b-[#a0a0a0] border-l-white border-r-[#a0a0a0] border-t-white"
          )}
        >
          {label}
        </button>
      ))}
    </div>
  </footer>
);

export default function App() {
  return (
    <div className="flex min-h-screen flex-col bg-[#efefef] font-[Open_Sans,Noto_Sans,sans-serif]">
      <TitleBar />
      <MenuBar />
      <Toolbars />
      <main className="flex flex-1">
        <div className="flex items-start">
          <SideBar items={draw} className="h-[363px]" />
          <SideBar items={modify} className="h-[363px]" />
          <SideBar items={dimension} className="h-[368px]" />
        </div>
        <div className="flex min-w-0 flex-1 flex-col border-l-2 border-t-2 border-[#777]">
          <div className="flex flex-1">
            <Drawing />
            <div className="flex w-[15px] flex-col bg-[#f3f3f3]">
              <Arrow dir="up" label="Scroll up" className="h-4" />
              <span className="h-[53px]" />
              <span className={clsx("h-[14px]", thumb)} />
              <span className="flex-1" />
              <Arrow dir="down" label="Scroll down" className="h-4" />
            </div>
          </div>
          <div className="pr-[15px]">
            <SheetTabs />
          </div>
        </div>
        <aside className="ml-px h-[421px] w-[128px] border-b border-r border-[#a8a8a8] pl-[3px] pt-[3px]">
          <div className="mr-px flex flex-col gap-px">
            <span className="h-[2px] border-b border-[#a0a0a0] bg-white" />
            <span className="h-[2px] border-b border-[#a0a0a0] bg-white" />
          </div>
          <ul className="mt-px grid h-[394px] auto-rows-fr text-[11px] leading-[15px] text-[#333]">
            {screenMenu.map((item, i) => (
              <li key={i}>{item}</li>
            ))}
          </ul>
        </aside>
      </main>
      <CommandWindow />
      <StatusBar />
    </div>
  );
}
